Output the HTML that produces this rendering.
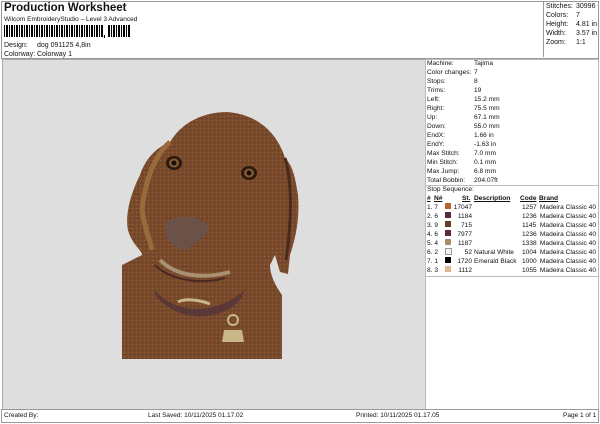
<!DOCTYPE html>
<html><head><style>
body{margin:0;width:600px;height:424px;background:#fff;position:relative;font-family:"Liberation Sans",sans-serif;font-size:7px;color:#111;overflow:hidden}
.a{position:absolute;white-space:nowrap;line-height:9px}
.r .a{font-size:6.6px}
.box{position:absolute;border:1px solid #999}
</style></head><body>
<div class="box" style="left:1px;top:1px;width:596px;height:56px"></div>
<div class="box" style="left:543px;top:1px;width:54px;height:56px;border-top:none;border-right:none;border-bottom:none"></div>
<div class="a" style="left:4px;top:2px;font-size:11.5px;font-weight:bold;line-height:13px">Production Worksheet</div>
<div class="a" style="left:4px;top:15px;font-size:6.5px">Wilcom EmbroideryStudio – Level 3 Advanced</div>
<svg style="position:absolute;left:4px;top:25px" width="128" height="14">
<g fill="#000">
<rect x="0" y="0" width="1" height="12"/><rect x="2" y="0" width="2" height="12"/><rect x="5" y="0" width="1" height="12"/><rect x="7" y="0" width="2" height="12"/><rect x="10" y="0" width="1" height="12"/><rect x="12" y="0" width="2" height="12"/><rect x="15" y="0" width="1" height="12"/><rect x="17" y="0" width="2" height="12"/><rect x="20" y="0" width="1" height="12"/><rect x="22" y="0" width="2" height="12"/><rect x="25" y="0" width="1" height="12"/><rect x="27" y="0" width="2" height="12"/><rect x="30" y="0" width="1" height="12"/><rect x="32" y="0" width="2" height="12"/><rect x="35" y="0" width="1" height="12"/><rect x="37" y="0" width="2" height="12"/><rect x="40" y="0" width="1" height="12"/><rect x="42" y="0" width="2" height="12"/><rect x="45" y="0" width="1" height="12"/><rect x="47" y="0" width="2" height="12"/><rect x="50" y="0" width="1" height="12"/><rect x="52" y="0" width="2" height="12"/><rect x="55" y="0" width="1" height="12"/><rect x="57" y="0" width="2" height="12"/><rect x="60" y="0" width="1" height="12"/><rect x="62" y="0" width="2" height="12"/><rect x="65" y="0" width="1" height="12"/><rect x="67" y="0" width="2" height="12"/><rect x="70" y="0" width="1" height="12"/><rect x="72" y="0" width="2" height="12"/><rect x="75" y="0" width="1" height="12"/><rect x="77" y="0" width="2" height="12"/><rect x="80" y="0" width="1" height="12"/><rect x="82" y="0" width="2" height="12"/><rect x="85" y="0" width="1" height="12"/><rect x="87" y="0" width="2" height="12"/><rect x="90" y="0" width="1" height="12"/><rect x="92" y="0" width="2" height="12"/><rect x="95" y="0" width="1" height="12"/><rect x="97" y="0" width="2" height="12"/><rect x="100" y="10" width="1" height="3"/><rect x="104" y="0" width="2" height="12"/><rect x="107" y="0" width="1" height="12"/><rect x="109" y="0" width="2" height="12"/><rect x="112" y="0" width="1" height="12"/><rect x="114" y="0" width="2" height="12"/><rect x="117" y="0" width="1" height="12"/><rect x="119" y="0" width="2" height="12"/><rect x="122" y="0" width="1" height="12"/><rect x="124" y="0" width="2" height="12"/>
</g></svg>
<div class="a" style="left:4px;top:41px">Design:</div><div class="a" style="left:37px;top:41px">dog 091125 4,8in</div>
<div class="a" style="left:4px;top:50px">Colorway:</div><div class="a" style="left:37px;top:50px">Colorway 1</div>

<div class="a" style="left:546px;top:2px">Stitches:</div><div class="a" style="left:576px;top:2px">30996</div>
<div class="a" style="left:546px;top:11px">Colors:</div><div class="a" style="left:576px;top:11px">7</div>
<div class="a" style="left:546px;top:20px">Height:</div><div class="a" style="left:576px;top:20px">4.81 in</div>
<div class="a" style="left:546px;top:29px">Width:</div><div class="a" style="left:576px;top:29px">3.57 in</div>
<div class="a" style="left:546px;top:38px">Zoom:</div><div class="a" style="left:576px;top:38px">1:1</div>

<div style="position:absolute;left:2px;top:59px;width:422px;height:349px;background:#dedede;border:1px solid #aaa"></div>
<div class="box" style="left:425px;top:59px;width:172px;height:349px;border-color:#bbb"></div>

<svg style="position:absolute;left:100px;top:80px" width="220" height="280" viewBox="0 0 220 280">
<defs><pattern id="t" width="4" height="4" patternUnits="userSpaceOnUse"><rect width="4" height="4" fill="#7a4a2c"/><rect x="0" y="0" width="1" height="1" fill="#956035"/><rect x="2" y="2" width="1" height="1" fill="#5e3620"/></pattern></defs>
<path d="M128 32 C100 32 80 45 70 62 C55 68 45 80 40 95 C30 115 25 135 28 150 C32 165 42 170 42 175 L22 185 L22 279 L182 279 L182 215 C175 205 170 195 170 185 L175 175 L180 192 L188 194 L190 175 C195 160 200 140 198 115 C195 95 192 85 185 78 C178 55 160 35 128 32 Z" fill="url(#t)"/>
<path d="M70 62 C55 75 45 100 42 130 C45 150 50 160 52 170" stroke="#9a6a3c" stroke-width="5" fill="none"/>
<path d="M185 78 C192 100 192 140 186 180" stroke="#4a2a1c" stroke-width="3" fill="none"/>
<ellipse cx="74" cy="83" rx="8" ry="7" fill="#2a1a10"/><ellipse cx="74" cy="83" rx="5" ry="4.5" fill="#8a5a2a"/><circle cx="74" cy="83" r="2.5" fill="#111"/>
<ellipse cx="149" cy="93" rx="8" ry="7" fill="#2a1a10"/><ellipse cx="149" cy="93" rx="5" ry="4.5" fill="#8a5a2a"/><circle cx="149" cy="93" r="2.5" fill="#111"/>
<path d="M66 143 C75 134 98 135 108 145 C110 155 95 163 85 170 C75 168 62 160 66 143 Z" fill="#6a5248"/>
<path d="M60 180 C75 195 100 200 130 192" stroke="#a89070" stroke-width="4" fill="none"/>
<path d="M55 185 C70 200 100 205 125 198" stroke="#4a2a24" stroke-width="2" fill="none"/>
<path d="M55 210 C70 230 110 240 145 210 L140 220 C115 245 75 240 55 215 Z" fill="#5a3838"/>
<path d="M78 222 C85 218 100 220 110 224" stroke="#c8b888" stroke-width="3" fill="none"/>
<circle cx="133" cy="240" r="5" stroke="#c8b888" stroke-width="2" fill="none"/>
<path d="M124 250 L142 250 L144 262 L122 262 Z" fill="#c8b888"/>
</svg>
<div class="r">
<div class="a" style="left:427px;top:59px">Machine:</div><div class="a" style="left:474px;top:59px">Tajima</div>
<div class="a" style="left:427px;top:68px">Color changes:</div><div class="a" style="left:474px;top:68px">7</div>
<div class="a" style="left:427px;top:77px">Stops:</div><div class="a" style="left:474px;top:77px">8</div>
<div class="a" style="left:427px;top:86px">Trims:</div><div class="a" style="left:474px;top:86px">19</div>
<div class="a" style="left:427px;top:95px">Left:</div><div class="a" style="left:474px;top:95px">15.2 mm</div>
<div class="a" style="left:427px;top:104px">Right:</div><div class="a" style="left:474px;top:104px">75.5 mm</div>
<div class="a" style="left:427px;top:113px">Up:</div><div class="a" style="left:474px;top:113px">67.1 mm</div>
<div class="a" style="left:427px;top:122px">Down:</div><div class="a" style="left:474px;top:122px">55.0 mm</div>
<div class="a" style="left:427px;top:131px">EndX:</div><div class="a" style="left:474px;top:131px">1.66 in</div>
<div class="a" style="left:427px;top:140px">EndY:</div><div class="a" style="left:474px;top:140px">-1.63 in</div>
<div class="a" style="left:427px;top:149px">Max Stitch:</div><div class="a" style="left:474px;top:149px">7.0 mm</div>
<div class="a" style="left:427px;top:158px">Min Stitch:</div><div class="a" style="left:474px;top:158px">0.1 mm</div>
<div class="a" style="left:427px;top:167px">Max Jump:</div><div class="a" style="left:474px;top:167px">6.8 mm</div>
<div class="a" style="left:427px;top:176px">Total Bobbin:</div><div class="a" style="left:474px;top:176px">204.07ft</div>
<div style="position:absolute;left:426px;top:185px;width:172px;border-top:1px solid #bbb"></div>
<div class="a" style="left:427px;top:185px">Stop Sequence:</div>
<div class="a" style="left:427px;top:194px;font-weight:bold;text-decoration:underline">#</div>
<div class="a" style="left:434px;top:194px;font-weight:bold;text-decoration:underline">N#</div>
<div class="a" style="left:462px;top:194px;font-weight:bold;text-decoration:underline">St.</div>
<div class="a" style="left:474px;top:194px;font-weight:bold;text-decoration:underline">Description</div>
<div class="a" style="left:520px;top:194px;font-weight:bold;text-decoration:underline">Code</div>
<div class="a" style="left:539px;top:194px;font-weight:bold;text-decoration:underline">Brand</div>
<div class="a" style="left:427px;top:203px">1. 7</div><div style="position:absolute;left:445px;top:203px;width:6px;height:6px;background:#b5622e"></div><div class="a" style="left:452px;top:203px;width:20px;text-align:right">17047</div><div class="a" style="left:522px;top:203px">1257</div><div class="a" style="left:539px;top:203px;width:57px;text-align:right">Madeira Classic 40</div>
<div class="a" style="left:427px;top:212px">2. 6</div><div style="position:absolute;left:445px;top:212px;width:6px;height:6px;background:#5a2a3a"></div><div class="a" style="left:452px;top:212px;width:20px;text-align:right">1184</div><div class="a" style="left:522px;top:212px">1236</div><div class="a" style="left:539px;top:212px;width:57px;text-align:right">Madeira Classic 40</div>
<div class="a" style="left:427px;top:221px">3. 9</div><div style="position:absolute;left:445px;top:221px;width:6px;height:6px;background:#6a3a2a"></div><div class="a" style="left:452px;top:221px;width:20px;text-align:right">715</div><div class="a" style="left:522px;top:221px">1145</div><div class="a" style="left:539px;top:221px;width:57px;text-align:right">Madeira Classic 40</div>
<div class="a" style="left:427px;top:230px">4. 6</div><div style="position:absolute;left:445px;top:230px;width:6px;height:6px;background:#5a2a3a"></div><div class="a" style="left:452px;top:230px;width:20px;text-align:right">7977</div><div class="a" style="left:522px;top:230px">1236</div><div class="a" style="left:539px;top:230px;width:57px;text-align:right">Madeira Classic 40</div>
<div class="a" style="left:427px;top:239px">5. 4</div><div style="position:absolute;left:445px;top:239px;width:6px;height:6px;background:#a88a68"></div><div class="a" style="left:452px;top:239px;width:20px;text-align:right">1187</div><div class="a" style="left:522px;top:239px">1338</div><div class="a" style="left:539px;top:239px;width:57px;text-align:right">Madeira Classic 40</div>
<div class="a" style="left:427px;top:248px">6. 2</div><div style="position:absolute;left:445px;top:248px;width:5px;height:5px;background:#f4f4f4;border:1px solid #999"></div><div class="a" style="left:452px;top:248px;width:20px;text-align:right">52</div><div class="a" style="left:474px;top:248px">Natural White</div><div class="a" style="left:522px;top:248px">1004</div><div class="a" style="left:539px;top:248px;width:57px;text-align:right">Madeira Classic 40</div>
<div class="a" style="left:427px;top:257px">7. 1</div><div style="position:absolute;left:445px;top:257px;width:6px;height:6px;background:#000"></div><div class="a" style="left:452px;top:257px;width:20px;text-align:right">1720</div><div class="a" style="left:474px;top:257px">Emerald Black</div><div class="a" style="left:522px;top:257px">1000</div><div class="a" style="left:539px;top:257px;width:57px;text-align:right">Madeira Classic 40</div>
<div class="a" style="left:427px;top:266px">8. 3</div><div style="position:absolute;left:445px;top:266px;width:6px;height:6px;background:#e0b890"></div><div class="a" style="left:452px;top:266px;width:20px;text-align:right">1112</div><div class="a" style="left:522px;top:266px">1055</div><div class="a" style="left:539px;top:266px;width:57px;text-align:right">Madeira Classic 40</div>
<div style="position:absolute;left:426px;top:276px;width:172px;border-top:1px solid #bbb"></div>
</div>
<div class="box" style="left:1px;top:409px;width:596px;height:12px"></div>
<div class="a" style="left:4px;top:411px;font-size:6.5px">Created By:</div>
<div class="a" style="left:148px;top:411px;font-size:6.5px">Last Saved: 10/11/2025 01.17.02</div>
<div class="a" style="left:356px;top:411px;font-size:6.5px">Printed: 10/11/2025 01.17.05</div>
<div class="a" style="left:563px;top:411px;font-size:6.5px">Page 1 of 1</div>
</body></html>
